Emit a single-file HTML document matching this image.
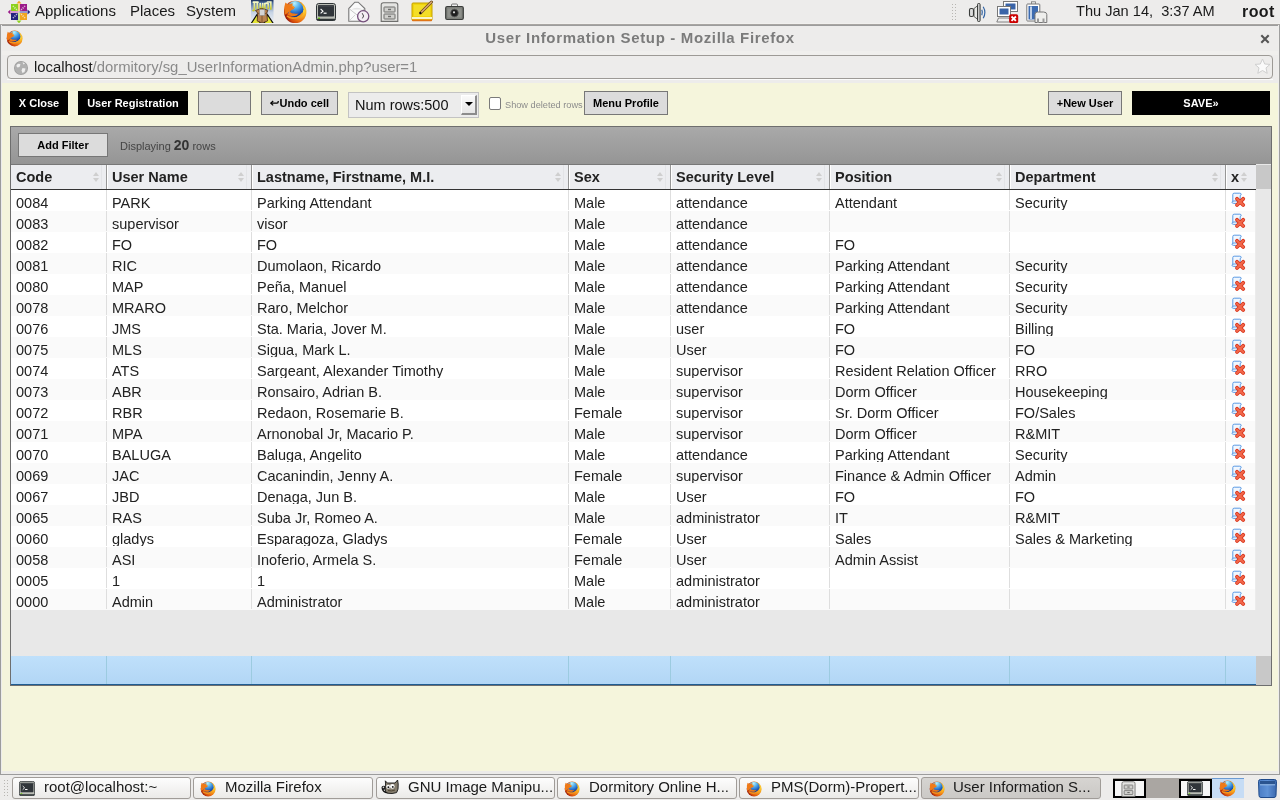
<!DOCTYPE html>
<html><head><meta charset="utf-8">
<style>
*{box-sizing:border-box;margin:0;padding:0}
html,body{width:1280px;height:800px;overflow:hidden;background:#edeceb;font-family:"Liberation Sans",sans-serif;position:relative}
.abs{position:absolute}
/* top panel */
#panel{left:0;top:0;width:1280px;height:23px;background:#edeceb}
.pm{position:absolute;top:2px;font-size:15px;color:#1a1a1a;line-height:17px}
#pline1{left:0;top:23px;width:1280px;height:1px;background:#f1f0ee}
#pline2{left:0;top:24px;width:1280px;height:1px;background:#a8a5a2}
#pline3{left:0;top:25px;width:1280px;height:1px;background:#9c9c9c}
/* window */
#wl{left:0;top:25px;width:2px;height:750px;background:linear-gradient(90deg,#9c9c9c 50%,#ececec 50%)}
#wr{left:1278px;top:25px;width:2px;height:750px;background:linear-gradient(90deg,#efeeec 50%,#9f9f9f 50%)}
#wb{left:0;top:774px;width:1280px;height:1px;background:#9c9c9c}
#title{left:0;top:29px;width:1280px;text-align:center;font-size:15px;letter-spacing:0.65px;font-weight:bold;color:#7b7b7b;line-height:17px}
#url{left:7px;top:55px;width:1266px;height:24px;border:1px solid #9d9a96;border-radius:4px;background:#edeceb}
#urltext{left:34px;top:58px;font-size:14.85px;line-height:18px;color:#8a8a8a;white-space:pre}
#page{left:2px;top:83px;width:1276px;height:688px;background:#f5f5dc}
#pagebot{left:2px;top:771px;width:1276px;height:3px;background:#ecebe9}
/* toolbar buttons */
.btn{position:absolute;height:24px;font-size:11px;font-weight:bold;text-align:center;line-height:22px;white-space:nowrap}
.blk{background:#000;color:#fff;border:1px solid #000}
.gry{background:#dcdcdc;color:#000;border:1px solid #777}
/* grid */
#grid{left:10px;top:126px;width:1262px;height:560px;border:1px solid #6e6e6e;background:#e8e8e8}
#fbar{left:11px;top:127px;width:1260px;height:37px;background:linear-gradient(#a9a9a9,#959595)}
#hdr{left:11px;top:164px;width:1245px;height:26px;background:#ecedf0;border-top:1px solid #777;border-bottom:1px solid #333}
#sbh{left:1256px;top:165px;width:15px;height:24px;background:#c8c8c8}
table{border-collapse:collapse;table-layout:fixed}
#rows{position:absolute;left:11px;top:190px;width:1245px}
#rows td{height:21px;font-size:14.5px;color:#222;padding:0 0 0 5px;border-left:1px solid #ddd;white-space:nowrap;overflow:hidden;vertical-align:top;line-height:24px}
#rows tr:nth-child(odd){background:#fff}
#rows tr:nth-child(even){background:#fafafa}
#rows td:first-child{border-left:none}
#foot{left:11px;top:656px;width:1245px;height:29px;background:linear-gradient(#bfe0fb,#b2d6f5);border-bottom:1px solid #1f5d92}
#sbf{left:1256px;top:656px;width:15px;height:29px;background:#c8c8c8}

.hc{position:absolute;top:165px;height:24px;overflow:hidden}
.hc b{position:absolute;left:6px;top:0;font-size:14.5px;font-weight:bold;color:#222;line-height:24px;white-space:nowrap}
.hs{border-left:1px solid #969696}
.hs:after{content:"";position:absolute;left:0;top:0;width:1px;height:24px;background:#fff}
.so{position:absolute;top:7px;width:7px;height:10px}
.so:before{content:"";position:absolute;left:0;top:0;border-left:3.5px solid transparent;border-right:3.5px solid transparent;border-bottom:4px solid #cfcfcf}
.so:after{content:"";position:absolute;left:0;top:6px;border-left:3.5px solid transparent;border-right:3.5px solid transparent;border-top:4px solid #cfcfcf}
.r{position:absolute;left:0;width:1245px;height:21px}
.c{position:absolute;top:0;height:20px;overflow:hidden}
.c.s{border-left:1px solid #dedede}
.c span{position:absolute;left:5px;top:3px;font-size:14.5px;line-height:20px;color:#222;white-space:nowrap}
.del{position:absolute;left:5px;top:2px}
.fs{top:656px;width:1px;height:28px;background:#9ccbe0}
.c:first-child span{left:6px}
.hc i.sl{position:absolute;top:0;width:1px;height:24px;background:#e3e4e7}
/* taskbar */
#task{left:0;top:775px;width:1280px;height:25px;background:#edeceb}
.tb{position:absolute;top:777px;height:22px;border:1px solid #a09c98;border-radius:3px;background:linear-gradient(#fdfdfd,#ebeae8);font-size:15px;line-height:19px;color:#1a1a1a;white-space:nowrap;overflow:hidden}
.tb span{position:absolute;left:31px;top:-1px}
</style></head><body><div id="wrap" style="position:absolute;left:0;top:0;width:1280px;height:800px;will-change:transform">
<!--ICONS-->
<svg width="0" height="0" style="position:absolute"><defs>
<radialGradient id="ffo" cx="0.78" cy="0.42" r="0.75"><stop offset="0" stop-color="#fff04a"/><stop offset="0.3" stop-color="#f9b523"/><stop offset="0.62" stop-color="#ec7414"/><stop offset="0.85" stop-color="#d2480c"/><stop offset="1" stop-color="#9c1c08"/></radialGradient>
<radialGradient id="ffb" cx="0.45" cy="0.15" r="0.9"><stop offset="0" stop-color="#b8f2fc"/><stop offset="0.35" stop-color="#55b0ec"/><stop offset="0.7" stop-color="#1f5fc0"/><stop offset="1" stop-color="#08206a"/></radialGradient>
<symbol id="ff" viewBox="0 0 24 24">
<circle cx="12.2" cy="12" r="11.2" fill="url(#ffo)"/>
<circle cx="12.2" cy="9.2" r="8.2" fill="url(#ffb)"/>
<path d="M1.6 15 L1.3 7 L2.4 2.6 L5 4.6 L9.6 3.2 L9.2 5.6 L11.8 7.4 L10.2 9.4 L8.6 9.8 L7.2 11.4 L5.2 12.6 Z" fill="#ef7a18"/>
<path d="M9.6 3.2 L9.2 5.6 L11.8 7.4 L10.8 8 L8.5 6.5 Z" fill="#f59a2a"/>
<path d="M6.2 11.6 Q9 14.4 15.6 13.6 L13.4 15.6 Q8.2 17.2 4.8 14.4 Z" fill="#ee7818"/>
<path d="M4 16 Q8 19.5 14 17.5 Q18 16 19.8 13" fill="none" stroke="#f59a20" stroke-width="1.6"/>
</symbol>
<symbol id="term" viewBox="0 0 20 18">
<rect x="0.5" y="0.5" width="19" height="17" rx="2.2" fill="#babdb6" stroke="#2e3436" stroke-width="1"/>
<rect x="2" y="2" width="16" height="11.5" rx="0.8" fill="#30353a"/>
<rect x="2.5" y="2.5" width="15" height="1" fill="#4a4f52"/>
<path d="M4.6 6 L7 8.2 L4.6 10.4" fill="none" stroke="#fff" stroke-width="1.1"/>
<rect x="7.6" y="9.6" width="3" height="1.2" fill="#fff"/>
<rect x="2" y="14.6" width="2" height="1.4" fill="#73d216"/>
<rect x="0.5" y="15.8" width="19" height="1.7" rx="0.8" fill="#2e3436"/>
</symbol>
<symbol id="cab" viewBox="0 0 19 20">
<path d="M1.2 19.4 V3 Q1.2 0.8 3.4 0.8 H15.6 Q17.8 0.8 17.8 3 V19.4 Z" fill="#e4e4e2" stroke="#6f6f6d" stroke-width="1.1"/>
<rect x="4" y="5" width="11" height="5" rx="0.5" fill="#cfcfcc" stroke="#6f6f6d" stroke-width="1"/>
<rect x="4" y="12" width="11" height="5" rx="0.5" fill="#cfcfcc" stroke="#6f6f6d" stroke-width="1"/>
<rect x="8" y="6.8" width="3" height="1.4" fill="#6f6f6d"/><rect x="8" y="13.8" width="3" height="1.4" fill="#6f6f6d"/>
</symbol>
</defs></svg>

<!--/ICONS-->
<svg width="0" height="0" style="position:absolute"><defs><symbol id="delic" viewBox="0 0 16 16">
<path d="M1.8 9.5 V2.5 Q1.8 1.2 3.2 1.2 H8.8 Q10.2 1.2 10.2 2.4 Q10.2 3.4 9.2 3.4 V9 H3 Q1 9 1 10.2 Q1 11.4 2.8 11.4 H7.5" fill="#f0f7ff" stroke="#5b9ae4" stroke-width="1"/>
<path d="M6 6.8 L12.2 13 M12.2 6.8 L6 13" stroke="#d8331b" stroke-width="3.8" stroke-linecap="round"/>
<path d="M6 6.8 L12.2 13 M12.2 6.8 L6 13" stroke="#f2684a" stroke-width="2.2" stroke-linecap="round"/>
</symbol></defs></svg>
<div id="panel" class="abs"></div>
<div class="pm" style="left:35px">Applications</div>
<div class="pm" style="left:130px">Places</div>
<div class="pm" style="left:186px">System</div>
<div class="pm" style="left:1076px;top:3px;font-size:14.6px">Thu Jan 14,&nbsp; 3:37 AM</div>
<div class="pm" style="left:1242px;top:3px;font-weight:bold;font-size:16px;letter-spacing:0.4px">root</div>
<!--PANEL-->
<svg class="abs" style="left:7px;top:0px" width="24" height="24" viewBox="0 0 24 24">
<path d="M12 0.8 L14.5 3.5 H9.5Z" fill="#f2a51f"/><path d="M12 23.2 L14.5 20.5 H9.5Z" fill="#8dd21c"/>
<path d="M0.8 12 L3.5 9.5 V14.5Z" fill="#9b1b8a"/><path d="M23.2 12 L20.5 9.5 V14.5Z" fill="#23237f"/>
<rect x="4" y="4" width="7" height="7" fill="#8dd21c"/><rect x="13" y="4" width="7" height="7" fill="#9b1b8a"/>
<rect x="4" y="13" width="7" height="7" fill="#23237f"/><rect x="13" y="13" width="7" height="7" fill="#f2a51f"/>
<path d="M6 6 L11 11 M18 6 L13 11 M6 18 L11 13 M18 18 L13 13" stroke="#f4f4f4" stroke-width="1.6" stroke-dasharray="1.1 1.1" opacity="0.75"/>
<rect x="11" y="3.5" width="2" height="8" fill="#f6d28a"/><rect x="11" y="12.5" width="2" height="8" fill="#cbe89a"/>
<rect x="3.5" y="11" width="8" height="2" fill="#d59ad0"/><rect x="12.5" y="11" width="8" height="2" fill="#9a9ac8"/>
</svg>
<svg class="abs" style="left:250px;top:0px" width="24" height="24" viewBox="0 0 24 24">
<defs><linearGradient id="bxg" x1="0" y1="0" x2="0" y2="1"><stop offset="0" stop-color="#1a2f58"/><stop offset="0.12" stop-color="#4c6c9c"/><stop offset="0.5" stop-color="#c5d2e4"/><stop offset="1" stop-color="#f2f3f6"/></linearGradient>
<linearGradient id="bxy" x1="0" y1="0" x2="0" y2="1"><stop offset="0" stop-color="#f4f8c8"/><stop offset="1" stop-color="#c8c820"/></linearGradient></defs>
<rect x="1" y="0" width="22.5" height="24" fill="url(#bxg)"/>
<path d="M0.8 24 L7 14.5 L10.5 24Z M23.6 24 L17.4 14.5 L14 24Z" fill="#e4e634" stroke="#0d0d0d" stroke-width="1.2" stroke-linejoin="round"/>
<g fill="none" stroke="url(#bxy)" stroke-width="1.7" stroke-linecap="round">
<path d="M3.4 2.2 H8 M4.4 2.4 V9.5 Q4 10.8 3 10.5 M7.3 3 V8.3"/>
<path d="M10.2 3.5 V8 Q11.5 8.8 12.7 8 V3.5"/>
<path d="M14.8 3.5 V8.5 M15 3.8 Q17 2.6 18.2 3.8 V8.5"/>
<path d="M17.5 2 H20.8 V9"/>
</g>
<path d="M5.5 10.5 L11.5 8.4 L17.8 10.2 L16.8 13 L17.5 21 L12 23 L7.2 21 L7.6 13Z" fill="#b98350" stroke="#4a2c12" stroke-width="0.8"/>
<path d="M7.6 13 L12 14.8 L16.8 13 M12 14.8 V23" fill="none" stroke="#6b4420" stroke-width="0.7"/>
<rect x="9.6" y="9.6" width="5.2" height="5.8" fill="#d4d4d4" stroke="#888" stroke-width="0.5"/>
</svg>
<svg class="abs" style="left:283px;top:0px" width="24" height="24"><use href="#ff"/></svg>
<svg class="abs" style="left:316px;top:3px" width="20" height="18"><use href="#term"/></svg>
<svg class="abs" style="left:348px;top:1px" width="22" height="22" viewBox="0 0 22 22">
<path d="M0.8 20.2 V7.5 L6.8 1.2 H10.2 L16.8 7.5 V20.2Z" fill="#fafafa" stroke="#777" stroke-width="1.1"/>
<path d="M1.5 8 L9 14 L16 8" fill="none" stroke="#c8c8c8" stroke-width="1"/><path d="M1.5 19.5 L7 14" stroke="#ccc" stroke-width="0.8"/>
<path d="M3 8.5 Q9 5 15 8.5" fill="#e3e3e3"/>
<circle cx="15.2" cy="15.3" r="5.6" fill="#f4eef4" stroke="#75507b" stroke-width="1.3"/>
<path d="M14.2 12.2 L15.6 15 L14.4 17.4" fill="none" stroke="#333" stroke-width="0.9"/>
</svg>
<svg class="abs" style="left:380px;top:2px" width="19" height="20"><use href="#cab"/></svg>
<svg class="abs" style="left:411px;top:0px" width="23" height="23" viewBox="0 0 23 23">
<rect x="1" y="3" width="20" height="17.5" rx="1" fill="#f1d50e" stroke="#c4a000" stroke-width="1"/>
<rect x="1" y="17" width="20" height="2" fill="#fbf5c8"/>
<rect x="1" y="19.5" width="20" height="1.8" rx="0.8" fill="#e07417"/>
<path d="M3 5 H19 V16 H3Z" fill="#f7e43a" opacity="0.6"/>
<path d="M9.5 13 L20.5 2" stroke="#6b4a1c" stroke-width="3" stroke-linecap="round"/>
<path d="M9.5 13 L20.5 2" stroke="#d9a870" stroke-width="1.6" stroke-linecap="round"/>
<circle cx="9.5" cy="13.1" r="1" fill="#000"/>
</svg>
<svg class="abs" style="left:445px;top:3px" width="19" height="18" viewBox="0 0 19 18">
<rect x="6.5" y="1" width="6" height="3" rx="1" fill="#eee" stroke="#555" stroke-width="0.8"/>
<rect x="0.7" y="3.5" width="17.6" height="13" rx="1.5" fill="#7d7f7a" stroke="#3a3c3a" stroke-width="1.2"/>
<rect x="2.5" y="5.5" width="14" height="9" fill="#8f918c"/>
<circle cx="9.5" cy="10" r="3.8" fill="#1e1e1e" stroke="#555" stroke-width="0.8"/>
<circle cx="9" cy="9.3" r="1.1" fill="#ddd"/>
</svg>
<svg class="abs" style="left:951px;top:4px" width="6" height="17" viewBox="0 0 6 17"><g fill="#b8b6b2"><rect x="1" y="0" width="1" height="1"/><rect x="4" y="0" width="1" height="1"/><rect x="1" y="3" width="1" height="1"/><rect x="4" y="3" width="1" height="1"/><rect x="1" y="6" width="1" height="1"/><rect x="4" y="6" width="1" height="1"/><rect x="1" y="9" width="1" height="1"/><rect x="4" y="9" width="1" height="1"/><rect x="1" y="12" width="1" height="1"/><rect x="4" y="12" width="1" height="1"/><rect x="1" y="15" width="1" height="1"/><rect x="4" y="15" width="1" height="1"/></g></svg>
<svg class="abs" style="left:967px;top:2px" width="20" height="20" viewBox="0 0 20 20">
<path d="M7 14.5 L11.5 18 V3 L7 6.5Z" fill="#e8e8e6" stroke="#555753" stroke-width="0.9"/>
<rect x="2.5" y="6.5" width="4" height="8" rx="1.5" fill="#ddd" stroke="#3a3c3a" stroke-width="1.1"/>
<rect x="10.5" y="1.5" width="2.6" height="18" rx="1" fill="#ccc" stroke="#3a3c3a" stroke-width="1"/>
<path d="M14.8 7.8 Q16 10.5 14.8 13.2" fill="none" stroke="#3465a4" stroke-width="1.2"/>
<path d="M16.2 4.8 Q19.5 10.5 16.2 16.2" fill="none" stroke="#3465a4" stroke-width="1.2"/>
</svg>
<svg class="abs" style="left:996px;top:1px" width="23" height="23" viewBox="0 0 23 23">
<rect x="7.5" y="0.5" width="14" height="10" fill="#fff" stroke="#777" stroke-width="1"/><rect x="9.5" y="2.5" width="10" height="6" fill="#3a64a8"/>
<rect x="1.5" y="5.5" width="13" height="10" fill="#fff" stroke="#777" stroke-width="1"/><rect x="3.5" y="7.5" width="9" height="6" fill="#3a64a8"/>
<path d="M0.8 21 L2.5 17 H13 L14.5 21Z" fill="#eee" stroke="#777" stroke-width="0.9"/>
<rect x="13.2" y="13.2" width="9" height="9" rx="1.8" fill="#cc0000"/>
<path d="M15.5 15.5 L19.9 19.9 M19.9 15.5 L15.5 19.9" stroke="#fff" stroke-width="1.8"/>
</svg>
<svg class="abs" style="left:1026px;top:1px" width="22" height="23" viewBox="0 0 22 23">
<rect x="5.5" y="0.8" width="4" height="2.5" fill="#eee" stroke="#777" stroke-width="0.8"/>
<rect x="0.8" y="3" width="13" height="17" rx="0.8" fill="#fff" stroke="#777" stroke-width="1"/>
<rect x="2.5" y="5" width="9.5" height="13.5" fill="#3d6bb0"/><rect x="4" y="5.5" width="2" height="12.5" fill="#dfe8f4" opacity="0.8"/>
<path d="M9 21.5 V13.5 Q9 11 11.5 11 H17.5 Q20.8 11 20.8 13.5 V21.5Z" fill="#eeeeec" stroke="#777" stroke-width="1"/>
<rect x="11" y="17.5" width="2" height="4.5" fill="#999"/><rect x="16.5" y="17.5" width="2" height="4.5" fill="#999"/>
</svg>

<!--/PANEL-->
<div id="pline1" class="abs"></div><div id="pline2" class="abs"></div><div id="pline3" class="abs"></div>

<div id="wl" class="abs"></div><div id="wr" class="abs"></div><div id="wb" class="abs"></div>
<div id="title" class="abs">User Information Setup - Mozilla Firefox</div>

<div id="url" class="abs"></div>
<div id="urltext" class="abs"><span style="color:#1a1a1a">localhost</span>/dormitory/sg_UserInformationAdmin.php?user=1</div>
<!--WIN-->
<svg class="abs" style="left:6px;top:30px" width="17" height="17"><use href="#ff"/></svg>
<svg class="abs" style="left:1260px;top:34px" width="10" height="10" viewBox="0 0 10 10"><path d="M1.3 1.3 L8.7 8.7 M8.7 1.3 L1.3 8.7" stroke="#555" stroke-width="2.1"/></svg>
<div class="abs" style="left:2px;top:51px;width:1276px;height:4px;background:#f0efed"></div>
<div class="abs" style="left:7px;top:79px;width:1266px;height:1px;background:#fbfbfa"></div>
<svg class="abs" style="left:13px;top:60px" width="16" height="16" viewBox="0 0 16 16">
<circle cx="8" cy="8" r="7" fill="#9d9d9d"/><circle cx="8" cy="8" r="6.2" fill="#b0b0b0"/>
<path d="M4 4.5 Q6 3 7.5 4.5 L6.5 7 L4.5 7.5 L3.3 6Z M9.5 8 L12.5 8.5 L11.5 12 L9.5 13 L8.5 10.5Z M9.5 2.2 Q11 2.5 12 3.5 L10.5 4.5Z" fill="#efefef"/>
</svg>
<svg class="abs" style="left:1254px;top:58px" width="17" height="17" viewBox="0 0 17 17">
<path d="M8.5 1 L10.7 6 L16 6.4 L12 9.9 L13.2 15.3 L8.5 12.5 L3.8 15.3 L5 9.9 L1 6.4 L6.3 6Z" fill="#fafafa" stroke="#cfcfcf" stroke-width="1" stroke-linejoin="round"/>
</svg>

<!--/WIN-->
<div id="page" class="abs"></div>
<div id="pagebot" class="abs"></div>

<div class="btn blk" style="left:10px;top:91px;width:58px">X Close</div>
<div class="btn blk" style="left:78px;top:91px;width:110px">User Registration</div>
<div class="btn gry" style="left:198px;top:91px;width:53px"></div>
<div class="btn gry" style="left:261px;top:91px;width:77px"><svg width="9" height="8" viewBox="0 0 9 8" style="vertical-align:1px;margin-right:0.5px"><path d="M1 5.2 H7 Q8.2 5.2 8.2 3.8 V3" fill="none" stroke="#000" stroke-width="1.3"/><path d="M3.2 3 L0.8 5.2 L3.2 7.4" fill="none" stroke="#000" stroke-width="1.2"/></svg>Undo cell</div>
<div class="btn gry" style="left:584px;top:91px;width:84px">Menu Profile</div>
<div class="btn gry" style="left:1048px;top:91px;width:74px">+New User</div>
<div class="btn blk" style="left:1132px;top:91px;width:138px">SAVE&raquo;</div>

<div id="grid" class="abs"></div>
<div id="fbar" class="abs"></div>
<div id="hdr" class="abs"></div>
<div id="sbh" class="abs"></div>
<div id="foot" class="abs"></div>
<div id="sbf" class="abs"></div>
<div class="abs" style="left:348px;top:92px;width:131px;height:26px;background:#ececec;border:1px solid #c3c3c3"></div>
<div class="abs" style="left:355px;top:92px;font-size:14.5px;line-height:26px;color:#111;white-space:nowrap">Num rows:500</div>
<div class="abs" style="left:461px;top:95px;width:16px;height:20px;background:linear-gradient(#fafafa,#e6e6e6);border-right:2px solid #8c8c8c;border-bottom:2px solid #8c8c8c;border-top:1px solid #fff;border-left:1px solid #fff"></div>
<div class="abs" style="left:465px;top:102px;width:0;height:0;border-left:4px solid transparent;border-right:4px solid transparent;border-top:4px solid #000"></div>
<div class="abs" style="left:489px;top:97px;width:12px;height:13px;background:#fff;border:1px solid #7a7a7a;border-radius:2px"></div>
<div class="abs" style="left:505px;top:98px;font-size:9.2px;line-height:14px;color:#8c8c8c;white-space:nowrap">Show deleted rows</div>
<div class="btn gry" style="left:18px;top:133px;width:90px;height:24px;line-height:22px">Add Filter</div>
<div class="abs" style="left:120px;top:135px;font-size:11px;line-height:20px;color:#444;white-space:nowrap">Displaying <b style="font-size:14px;color:#333">20</b> rows</div>
<!--GRID-->
<div class="hc" style="left:10px;width:96px"><b style="left:6px">Code</b><i class="so" style="left:82.5px"></i><i class="sl" style="left:91px"></i></div>
<div class="hc hs" style="left:106px;width:145px"><b style="left:5px">User Name</b><i class="so" style="left:130.5px"></i><i class="sl" style="left:139px"></i></div>
<div class="hc hs" style="left:251px;width:317px"><b style="left:5px">Lastname, Firstname, M.I.</b><i class="so" style="left:302.5px"></i><i class="sl" style="left:311px"></i></div>
<div class="hc hs" style="left:568px;width:102px"><b style="left:5px">Sex</b><i class="so" style="left:87.5px"></i><i class="sl" style="left:96px"></i></div>
<div class="hc hs" style="left:670px;width:159px"><b style="left:5px">Security Level</b><i class="so" style="left:144.5px"></i><i class="sl" style="left:153px"></i></div>
<div class="hc hs" style="left:829px;width:180px"><b style="left:5px">Position</b><i class="so" style="left:165.5px"></i><i class="sl" style="left:174px"></i></div>
<div class="hc hs" style="left:1009px;width:216px"><b style="left:5px">Department</b><i class="so" style="left:201.5px"></i><i class="sl" style="left:210px"></i></div>
<div class="hc hs" style="left:1225px;width:30px"><b style="left:5px">x</b><i class="so" style="left:14.5px"></i></div>
<div id="body" class="abs" style="left:11px;top:190px;width:1245px;height:420px">
<div class="r" style="top:0px;background:#fff"><div class="c" style="left:-1px;width:96px"><span>0084</span></div><div class="c s" style="left:95px;width:145px"><span>PARK</span></div><div class="c s" style="left:240px;width:317px"><span>Parking Attendant</span></div><div class="c s" style="left:557px;width:102px"><span>Male</span></div><div class="c s" style="left:659px;width:159px"><span>attendance</span></div><div class="c s" style="left:818px;width:180px"><span>Attendant</span></div><div class="c s" style="left:998px;width:216px"><span>Security</span></div><div class="c s" style="left:1214px;width:30px"><svg class="del" width="16" height="16" viewBox="0 0 16 16"><use href="#delic"/></svg></div></div>
<div class="r" style="top:21px;background:#fafafa"><div class="c" style="left:-1px;width:96px"><span>0083</span></div><div class="c s" style="left:95px;width:145px"><span>supervisor</span></div><div class="c s" style="left:240px;width:317px"><span>visor</span></div><div class="c s" style="left:557px;width:102px"><span>Male</span></div><div class="c s" style="left:659px;width:159px"><span>attendance</span></div><div class="c s" style="left:818px;width:180px"><span></span></div><div class="c s" style="left:998px;width:216px"><span></span></div><div class="c s" style="left:1214px;width:30px"><svg class="del" width="16" height="16" viewBox="0 0 16 16"><use href="#delic"/></svg></div></div>
<div class="r" style="top:42px;background:#fff"><div class="c" style="left:-1px;width:96px"><span>0082</span></div><div class="c s" style="left:95px;width:145px"><span>FO</span></div><div class="c s" style="left:240px;width:317px"><span>FO</span></div><div class="c s" style="left:557px;width:102px"><span>Male</span></div><div class="c s" style="left:659px;width:159px"><span>attendance</span></div><div class="c s" style="left:818px;width:180px"><span>FO</span></div><div class="c s" style="left:998px;width:216px"><span></span></div><div class="c s" style="left:1214px;width:30px"><svg class="del" width="16" height="16" viewBox="0 0 16 16"><use href="#delic"/></svg></div></div>
<div class="r" style="top:63px;background:#fafafa"><div class="c" style="left:-1px;width:96px"><span>0081</span></div><div class="c s" style="left:95px;width:145px"><span>RIC</span></div><div class="c s" style="left:240px;width:317px"><span>Dumolaon, Ricardo</span></div><div class="c s" style="left:557px;width:102px"><span>Male</span></div><div class="c s" style="left:659px;width:159px"><span>attendance</span></div><div class="c s" style="left:818px;width:180px"><span>Parking Attendant</span></div><div class="c s" style="left:998px;width:216px"><span>Security</span></div><div class="c s" style="left:1214px;width:30px"><svg class="del" width="16" height="16" viewBox="0 0 16 16"><use href="#delic"/></svg></div></div>
<div class="r" style="top:84px;background:#fff"><div class="c" style="left:-1px;width:96px"><span>0080</span></div><div class="c s" style="left:95px;width:145px"><span>MAP</span></div><div class="c s" style="left:240px;width:317px"><span>Peña, Manuel</span></div><div class="c s" style="left:557px;width:102px"><span>Male</span></div><div class="c s" style="left:659px;width:159px"><span>attendance</span></div><div class="c s" style="left:818px;width:180px"><span>Parking Attendant</span></div><div class="c s" style="left:998px;width:216px"><span>Security</span></div><div class="c s" style="left:1214px;width:30px"><svg class="del" width="16" height="16" viewBox="0 0 16 16"><use href="#delic"/></svg></div></div>
<div class="r" style="top:105px;background:#fafafa"><div class="c" style="left:-1px;width:96px"><span>0078</span></div><div class="c s" style="left:95px;width:145px"><span>MRARO</span></div><div class="c s" style="left:240px;width:317px"><span>Raro, Melchor</span></div><div class="c s" style="left:557px;width:102px"><span>Male</span></div><div class="c s" style="left:659px;width:159px"><span>attendance</span></div><div class="c s" style="left:818px;width:180px"><span>Parking Attendant</span></div><div class="c s" style="left:998px;width:216px"><span>Security</span></div><div class="c s" style="left:1214px;width:30px"><svg class="del" width="16" height="16" viewBox="0 0 16 16"><use href="#delic"/></svg></div></div>
<div class="r" style="top:126px;background:#fff"><div class="c" style="left:-1px;width:96px"><span>0076</span></div><div class="c s" style="left:95px;width:145px"><span>JMS</span></div><div class="c s" style="left:240px;width:317px"><span>Sta. Maria, Jover M.</span></div><div class="c s" style="left:557px;width:102px"><span>Male</span></div><div class="c s" style="left:659px;width:159px"><span>user</span></div><div class="c s" style="left:818px;width:180px"><span>FO</span></div><div class="c s" style="left:998px;width:216px"><span>Billing</span></div><div class="c s" style="left:1214px;width:30px"><svg class="del" width="16" height="16" viewBox="0 0 16 16"><use href="#delic"/></svg></div></div>
<div class="r" style="top:147px;background:#fafafa"><div class="c" style="left:-1px;width:96px"><span>0075</span></div><div class="c s" style="left:95px;width:145px"><span>MLS</span></div><div class="c s" style="left:240px;width:317px"><span>Sigua, Mark L.</span></div><div class="c s" style="left:557px;width:102px"><span>Male</span></div><div class="c s" style="left:659px;width:159px"><span>User</span></div><div class="c s" style="left:818px;width:180px"><span>FO</span></div><div class="c s" style="left:998px;width:216px"><span>FO</span></div><div class="c s" style="left:1214px;width:30px"><svg class="del" width="16" height="16" viewBox="0 0 16 16"><use href="#delic"/></svg></div></div>
<div class="r" style="top:168px;background:#fff"><div class="c" style="left:-1px;width:96px"><span>0074</span></div><div class="c s" style="left:95px;width:145px"><span>ATS</span></div><div class="c s" style="left:240px;width:317px"><span>Sargeant, Alexander Timothy</span></div><div class="c s" style="left:557px;width:102px"><span>Male</span></div><div class="c s" style="left:659px;width:159px"><span>supervisor</span></div><div class="c s" style="left:818px;width:180px"><span>Resident Relation Officer</span></div><div class="c s" style="left:998px;width:216px"><span>RRO</span></div><div class="c s" style="left:1214px;width:30px"><svg class="del" width="16" height="16" viewBox="0 0 16 16"><use href="#delic"/></svg></div></div>
<div class="r" style="top:189px;background:#fafafa"><div class="c" style="left:-1px;width:96px"><span>0073</span></div><div class="c s" style="left:95px;width:145px"><span>ABR</span></div><div class="c s" style="left:240px;width:317px"><span>Ronsairo, Adrian B.</span></div><div class="c s" style="left:557px;width:102px"><span>Male</span></div><div class="c s" style="left:659px;width:159px"><span>supervisor</span></div><div class="c s" style="left:818px;width:180px"><span>Dorm Officer</span></div><div class="c s" style="left:998px;width:216px"><span>Housekeeping</span></div><div class="c s" style="left:1214px;width:30px"><svg class="del" width="16" height="16" viewBox="0 0 16 16"><use href="#delic"/></svg></div></div>
<div class="r" style="top:210px;background:#fff"><div class="c" style="left:-1px;width:96px"><span>0072</span></div><div class="c s" style="left:95px;width:145px"><span>RBR</span></div><div class="c s" style="left:240px;width:317px"><span>Redaon, Rosemarie B.</span></div><div class="c s" style="left:557px;width:102px"><span>Female</span></div><div class="c s" style="left:659px;width:159px"><span>supervisor</span></div><div class="c s" style="left:818px;width:180px"><span>Sr. Dorm Officer</span></div><div class="c s" style="left:998px;width:216px"><span>FO/Sales</span></div><div class="c s" style="left:1214px;width:30px"><svg class="del" width="16" height="16" viewBox="0 0 16 16"><use href="#delic"/></svg></div></div>
<div class="r" style="top:231px;background:#fafafa"><div class="c" style="left:-1px;width:96px"><span>0071</span></div><div class="c s" style="left:95px;width:145px"><span>MPA</span></div><div class="c s" style="left:240px;width:317px"><span>Arnonobal Jr, Macario P.</span></div><div class="c s" style="left:557px;width:102px"><span>Male</span></div><div class="c s" style="left:659px;width:159px"><span>supervisor</span></div><div class="c s" style="left:818px;width:180px"><span>Dorm Officer</span></div><div class="c s" style="left:998px;width:216px"><span>R&amp;MIT</span></div><div class="c s" style="left:1214px;width:30px"><svg class="del" width="16" height="16" viewBox="0 0 16 16"><use href="#delic"/></svg></div></div>
<div class="r" style="top:252px;background:#fff"><div class="c" style="left:-1px;width:96px"><span>0070</span></div><div class="c s" style="left:95px;width:145px"><span>BALUGA</span></div><div class="c s" style="left:240px;width:317px"><span>Baluga, Angelito</span></div><div class="c s" style="left:557px;width:102px"><span>Male</span></div><div class="c s" style="left:659px;width:159px"><span>attendance</span></div><div class="c s" style="left:818px;width:180px"><span>Parking Attendant</span></div><div class="c s" style="left:998px;width:216px"><span>Security</span></div><div class="c s" style="left:1214px;width:30px"><svg class="del" width="16" height="16" viewBox="0 0 16 16"><use href="#delic"/></svg></div></div>
<div class="r" style="top:273px;background:#fafafa"><div class="c" style="left:-1px;width:96px"><span>0069</span></div><div class="c s" style="left:95px;width:145px"><span>JAC</span></div><div class="c s" style="left:240px;width:317px"><span>Cacanindin, Jenny A.</span></div><div class="c s" style="left:557px;width:102px"><span>Female</span></div><div class="c s" style="left:659px;width:159px"><span>supervisor</span></div><div class="c s" style="left:818px;width:180px"><span>Finance &amp; Admin Officer</span></div><div class="c s" style="left:998px;width:216px"><span>Admin</span></div><div class="c s" style="left:1214px;width:30px"><svg class="del" width="16" height="16" viewBox="0 0 16 16"><use href="#delic"/></svg></div></div>
<div class="r" style="top:294px;background:#fff"><div class="c" style="left:-1px;width:96px"><span>0067</span></div><div class="c s" style="left:95px;width:145px"><span>JBD</span></div><div class="c s" style="left:240px;width:317px"><span>Denaga, Jun B.</span></div><div class="c s" style="left:557px;width:102px"><span>Male</span></div><div class="c s" style="left:659px;width:159px"><span>User</span></div><div class="c s" style="left:818px;width:180px"><span>FO</span></div><div class="c s" style="left:998px;width:216px"><span>FO</span></div><div class="c s" style="left:1214px;width:30px"><svg class="del" width="16" height="16" viewBox="0 0 16 16"><use href="#delic"/></svg></div></div>
<div class="r" style="top:315px;background:#fafafa"><div class="c" style="left:-1px;width:96px"><span>0065</span></div><div class="c s" style="left:95px;width:145px"><span>RAS</span></div><div class="c s" style="left:240px;width:317px"><span>Suba Jr, Romeo A.</span></div><div class="c s" style="left:557px;width:102px"><span>Male</span></div><div class="c s" style="left:659px;width:159px"><span>administrator</span></div><div class="c s" style="left:818px;width:180px"><span>IT</span></div><div class="c s" style="left:998px;width:216px"><span>R&amp;MIT</span></div><div class="c s" style="left:1214px;width:30px"><svg class="del" width="16" height="16" viewBox="0 0 16 16"><use href="#delic"/></svg></div></div>
<div class="r" style="top:336px;background:#fff"><div class="c" style="left:-1px;width:96px"><span>0060</span></div><div class="c s" style="left:95px;width:145px"><span>gladys</span></div><div class="c s" style="left:240px;width:317px"><span>Esparagoza, Gladys</span></div><div class="c s" style="left:557px;width:102px"><span>Female</span></div><div class="c s" style="left:659px;width:159px"><span>User</span></div><div class="c s" style="left:818px;width:180px"><span>Sales</span></div><div class="c s" style="left:998px;width:216px"><span>Sales &amp; Marketing</span></div><div class="c s" style="left:1214px;width:30px"><svg class="del" width="16" height="16" viewBox="0 0 16 16"><use href="#delic"/></svg></div></div>
<div class="r" style="top:357px;background:#fafafa"><div class="c" style="left:-1px;width:96px"><span>0058</span></div><div class="c s" style="left:95px;width:145px"><span>ASI</span></div><div class="c s" style="left:240px;width:317px"><span>Inoferio, Armela S.</span></div><div class="c s" style="left:557px;width:102px"><span>Female</span></div><div class="c s" style="left:659px;width:159px"><span>User</span></div><div class="c s" style="left:818px;width:180px"><span>Admin Assist</span></div><div class="c s" style="left:998px;width:216px"><span></span></div><div class="c s" style="left:1214px;width:30px"><svg class="del" width="16" height="16" viewBox="0 0 16 16"><use href="#delic"/></svg></div></div>
<div class="r" style="top:378px;background:#fff"><div class="c" style="left:-1px;width:96px"><span>0005</span></div><div class="c s" style="left:95px;width:145px"><span>1</span></div><div class="c s" style="left:240px;width:317px"><span>1</span></div><div class="c s" style="left:557px;width:102px"><span>Male</span></div><div class="c s" style="left:659px;width:159px"><span>administrator</span></div><div class="c s" style="left:818px;width:180px"><span></span></div><div class="c s" style="left:998px;width:216px"><span></span></div><div class="c s" style="left:1214px;width:30px"><svg class="del" width="16" height="16" viewBox="0 0 16 16"><use href="#delic"/></svg></div></div>
<div class="r" style="top:399px;background:#fafafa"><div class="c" style="left:-1px;width:96px"><span>0000</span></div><div class="c s" style="left:95px;width:145px"><span>Admin</span></div><div class="c s" style="left:240px;width:317px"><span>Administrator</span></div><div class="c s" style="left:557px;width:102px"><span>Male</span></div><div class="c s" style="left:659px;width:159px"><span>administrator</span></div><div class="c s" style="left:818px;width:180px"><span></span></div><div class="c s" style="left:998px;width:216px"><span></span></div><div class="c s" style="left:1214px;width:30px"><svg class="del" width="16" height="16" viewBox="0 0 16 16"><use href="#delic"/></svg></div></div>
</div>
<div class="abs fs" style="left:106px"></div>
<div class="abs fs" style="left:251px"></div>
<div class="abs fs" style="left:568px"></div>
<div class="abs fs" style="left:670px"></div>
<div class="abs fs" style="left:829px"></div>
<div class="abs fs" style="left:1009px"></div>
<div class="abs fs" style="left:1225px"></div>
<!--/GRID-->
<div class="abs" style="left:1255px;top:190px;width:1px;height:420px;background:#ececec"></div>


<div id="task" class="abs"></div>
<div class="tb" style="left:12px;width:179px"><span>root@localhost:~</span></div>
<div class="tb" style="left:193px;width:180px"><span>Mozilla Firefox</span></div>
<div class="tb" style="left:376px;width:179px"><span>GNU Image Manipu...</span></div>
<div class="tb" style="left:557px;width:180px"><span>Dormitory Online H...</span></div>
<div class="tb" style="left:739px;width:180px"><span>PMS(Dorm)-Propert...</span></div>
<div class="tb" style="left:921px;width:180px;background:linear-gradient(#d6d4d1,#cbc9c6)"><span>User Information S...</span></div>
<!--TASK-->
<svg class="abs" style="left:3px;top:780px" width="6" height="17" viewBox="0 0 6 17"><g fill="#b8b6b2"><rect x="1" y="0" width="1" height="1"/><rect x="4" y="0" width="1" height="1"/><rect x="1" y="3" width="1" height="1"/><rect x="4" y="3" width="1" height="1"/><rect x="1" y="6" width="1" height="1"/><rect x="4" y="6" width="1" height="1"/><rect x="1" y="9" width="1" height="1"/><rect x="4" y="9" width="1" height="1"/><rect x="1" y="12" width="1" height="1"/><rect x="4" y="12" width="1" height="1"/><rect x="1" y="15" width="1" height="1"/><rect x="4" y="15" width="1" height="1"/></g></svg>
<svg class="abs" style="left:19px;top:781px" width="16" height="15" viewBox="0 0 20 18" preserveAspectRatio="none"><use href="#term"/></svg>
<svg class="abs" style="left:200px;top:781px" width="16" height="16"><use href="#ff"/></svg>
<svg class="abs" style="left:378px;top:778px" width="26" height="20" viewBox="0 0 26 20">
<path d="M7.6 13.8 Q6.6 9 7.6 6 L7.3 2.8 L9.3 5 H17 L19.6 2 L20.2 6 Q20.6 12 18.6 14.6 Q14 16.2 9.6 15.2 Z" fill="#857d6e" stroke="#161616" stroke-width="0.9"/>
<path d="M4.2 10.5 Q5 14 9.5 15" fill="none" stroke="#161616" stroke-width="1.2"/>
<circle cx="5.6" cy="9.8" r="2.1" fill="#1c1c1c"/><circle cx="5.4" cy="9.4" r="0.8" fill="#d8d8d8"/>
<ellipse cx="10.2" cy="8.8" rx="2" ry="2.1" fill="#fafafa"/><ellipse cx="14.3" cy="8.4" rx="2.3" ry="2.3" fill="#fafafa"/>
<circle cx="10.4" cy="9.2" r="0.95" fill="#111"/><circle cx="14.8" cy="8.9" r="0.95" fill="#111"/>
<path d="M10 12.5 Q13.5 13.6 17 12" fill="none" stroke="#4a3f2c" stroke-width="0.9"/>
</svg>
<svg class="abs" style="left:564px;top:781px" width="16" height="16"><use href="#ff"/></svg>
<svg class="abs" style="left:746px;top:781px" width="16" height="16"><use href="#ff"/></svg>
<svg class="abs" style="left:929px;top:781px" width="16" height="16"><use href="#ff"/></svg>
<div class="abs" style="left:1113px;top:778px;width:131px;height:20px;background:#aaa6a2"></div>
<div class="abs" style="left:1113px;top:779px;width:33px;height:19px;background:#f6f6f6;border:2px solid #000"></div>
<svg class="abs" style="left:1121px;top:781px" width="15" height="16"><use href="#cab"/></svg>
<div class="abs" style="left:1179px;top:779px;width:33px;height:19px;background:#f6f6f6;border:2px solid #000"></div>
<svg class="abs" style="left:1187px;top:781px" width="16" height="15" viewBox="0 0 20 18" preserveAspectRatio="none"><use href="#term"/></svg>
<div class="abs" style="left:1212px;top:778px;width:32px;height:20px;background:#c6dcf5;border-top:1px solid #6c9bd2"></div>
<svg class="abs" style="left:1219px;top:780px" width="17" height="17"><use href="#ff"/></svg>
<svg class="abs" style="left:1257px;top:778px" width="21" height="21" viewBox="0 0 21 21">
<defs><linearGradient id="trg" x1="0" y1="0" x2="1" y2="0"><stop offset="0" stop-color="#4a7cc4"/><stop offset="0.5" stop-color="#5f92d6"/><stop offset="1" stop-color="#3a68ae"/></linearGradient></defs>
<path d="M1.5 3.5 Q1.5 1.5 3.5 1.5 H17.5 Q19.5 1.5 19.5 3.5 L19 17.5 Q19 19.5 17 19.5 H4 Q2 19.5 2 17.5Z" fill="url(#trg)" stroke="#1f4a8a" stroke-width="1"/>
<path d="M3 3 H18 V6.5 H3Z" fill="#2a548f"/>
<path d="M3 6.8 H18" stroke="#9cc0ec" stroke-width="1"/>
</svg>

<!--/TASK-->
</div></body></html>
